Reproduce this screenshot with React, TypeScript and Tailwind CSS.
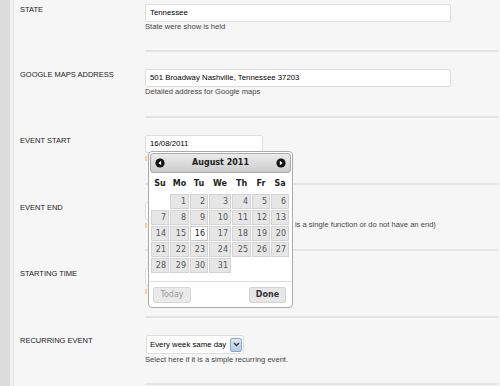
import React from "react";

const cols = ["w-[19px]", "w-[20px]", "w-[19px]", "w-[23px]", "w-[20px]", "w-[19px]", "w-[19px]"];
const dayNames = ["Su", "Mo", "Tu", "We", "Th", "Fr", "Sa"];

const weeks: (number | null)[][] = [
  [null, 1, 2, 3, 4, 5, 6],
  [7, 8, 9, 10, 11, 12, 13],
  [14, 15, 16, 17, 18, 19, 20],
  [21, 22, 23, 24, 25, 26, 27],
  [28, 29, 30, 31, null, null, null],
];

const Arrow = ({ dir }: { dir: "left" | "right" }) => (
  <svg width="10" height="10" viewBox="0 0 10 10">
    <circle cx="5" cy="5" r="4.6" fill="#111" />
    {dir === "left" ? (
      <polygon points="6.2,2.8 3.4,5 6.2,7.2" fill="#fff" />
    ) : (
      <polygon points="3.8,2.8 6.6,5 3.8,7.2" fill="#fff" />
    )}
  </svg>
);

const Calendar = () => (
  <div className="absolute left-[148px] top-[151px] w-[145px] bg-white border border-[#aaa] rounded-[4px] p-[1px] font-['DejaVu_Sans',sans-serif]">
    {/* header */}
    <div className="h-[20px] flex items-center justify-between px-[4px] bg-gradient-to-b from-[#ececec] to-[#cbcbcb] border border-[#aaa] rounded-[3px]">
      <Arrow dir="left" />
      <span className="text-[8px] font-bold text-[#222]">August 2011</span>
      <Arrow dir="right" />
    </div>
    {/* day names */}
    <div className="flex h-[21px] items-center ml-[1px]">
      {dayNames.map((d, i) => (
        <div key={d} className={`${cols[i]} pr-[1px] text-center text-[8px] font-bold text-[#222]`}>
          {d}
        </div>
      ))}
    </div>
    {/* days */}
    <div className="ml-[1px]">
      {weeks.map((w, r) => (
        <div key={r} className="flex">
          {w.map((d, i) => (
            <div key={i} className={`${cols[i]} pr-[1px] pb-[1px]`}>
              {d === null ? (
                <div className="h-[15px]" />
              ) : d === 16 ? (
                <div className="h-[15px] bg-white border border-[#c8c8c8] text-right pr-[2px] text-[8px] leading-[13px] text-[#222]">
                  {d}
                </div>
              ) : (
                <div className="h-[15px] bg-[#e6e6e6] border border-[#d3d3d3] text-right pr-[2px] text-[8px] leading-[13px] text-[#555]">
                  {d}
                </div>
              )}
            </div>
          ))}
        </div>
      ))}
    </div>
    {/* footer */}
    <div className="mt-[7px] border-t border-[#ddd] flex justify-between pt-[5px] pb-[3px]">
      <div className="ml-[3px] w-[38px] h-[16px] bg-[#e9e9e9] border border-[#d8d8d8] rounded-[2px] flex items-center justify-center text-[8px] text-[#9a9a9a]">
        Today
      </div>
      <div className="mr-[5px] w-[37px] h-[16px] bg-[#e6e6e6] border border-[#d3d3d3] rounded-[2px] flex items-center justify-center text-[8px] font-bold text-[#333]">
        Done
      </div>
    </div>
  </div>
);

const Mark = () => <span className="inline-block w-[2px] h-[5px] bg-[#f3d39c] mr-[1px] align-middle" />;

type RowProps = {
  label: string;
  h: string;
  pt: string;
  children?: React.ReactNode;
};

const Row = ({ label, h, pt, children }: RowProps) => (
  <div className={`flex ${h}`}>
    <div className={`w-[131px] pl-[6px] ${pt} shrink-0`}>
      <div className="text-[7.5px] leading-[11px] text-[#222] whitespace-nowrap">{label}</div>
    </div>
    <div className={`flex-1 mr-[2px] border-b-2 border-[#e4e4e4] ${pt}`}>{children}</div>
  </div>
);

const Input = ({ value, w }: { value: string; w: string }) => (
  <div className={`${w} h-[18px] bg-white border border-[#dedede] rounded-[2px] pl-[4px] text-[7.8px] leading-[16px] text-[#000] whitespace-nowrap`}>
    {value}
  </div>
);

const Help = ({ children }: { children: React.ReactNode }) => (
  <div className="text-[7.6px] leading-[10px] text-[#444] whitespace-nowrap">{children}</div>
);

export default function App() {
  return (
    <div className="relative w-[500px] h-[386px] overflow-hidden flex bg-[#f6f6f6] font-['Liberation_Sans',Arial,sans-serif]">
      <div className="w-[10px] shrink-0 bg-[#dcdcdc]" />
      <div className="w-[4px] shrink-0 bg-[#f1f1f1] border-r border-[#e2e2e2]" />
      <div className="flex-1 flex flex-col">
        <Row label="STATE" h="h-[52px]" pt="pt-[4px]">
          <Input value="Tennessee" w="w-[306px]" />
          <Help>State were show is held</Help>
        </Row>
        <Row label="GOOGLE MAPS ADDRESS" h="h-[66px]" pt="pt-[17px]">
          <Input value="501 Broadway Nashville, Tennessee 37203" w="w-[306px]" />
          <Help>Detailed address for Google maps</Help>
        </Row>
        <Row label="EVENT START" h="h-[67px]" pt="pt-[17px]">
          <Input value="16/08/2011" w="w-[118px]" />
          <Help>
            <Mark />
            Date the event starts
          </Help>
        </Row>
        <Row label="EVENT END" h="h-[66px]" pt="pt-[17px]">
          <Input value="" w="w-[118px]" />
          <Help>
            <Mark />
            Date event ends. Leave this field blank (if it is a single function or do not have an end)
          </Help>
        </Row>
        <Row label="STARTING TIME" h="h-[67px]" pt="pt-[17px]">
          <Input value="" w="w-[118px]" />
          <Help>
            <Mark />
            Time the event starts
          </Help>
        </Row>
        <Row label="RECURRING EVENT" h="h-[67px]" pt="pt-[17px]">
          <div className="ml-[1px] w-[98px] h-[19px] bg-white border border-[#dedede] rounded-[2px] flex items-center justify-between pl-[3px] pr-[1px]">
            <span className="text-[7.8px] text-[#000] whitespace-nowrap">Every week same day</span>
            <span className="w-[12px] h-[14px] bg-gradient-to-b from-[#dbe6f4] to-[#b7cbe6] border border-[#8ea6c8] rounded-[2px] flex items-center justify-center">
              <svg width="7" height="5" viewBox="0 0 7 5">
                <polyline points="1,1 3.5,3.5 6,1" fill="none" stroke="#333" strokeWidth="1.3" />
              </svg>
            </span>
          </div>
          <div className="mt-[1px]">
            <Help>Select here if it is a simple recurring event.</Help>
          </div>
        </Row>
      </div>
      <Calendar />
    </div>
  );
}
